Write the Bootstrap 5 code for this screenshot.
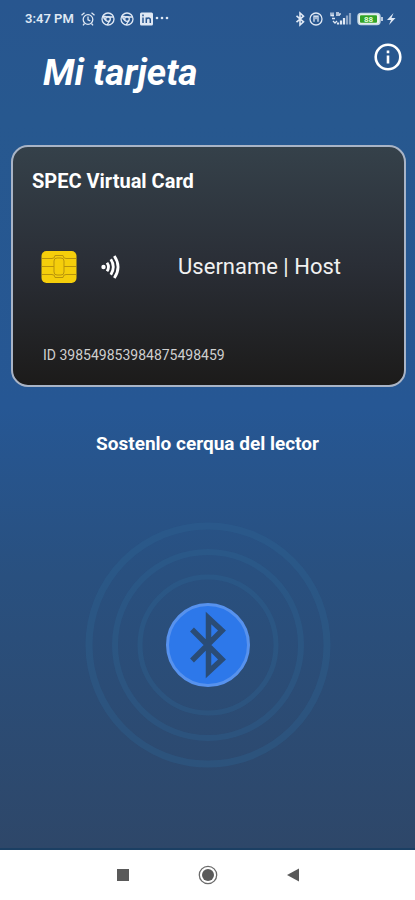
<!DOCTYPE html>
<html lang="es">
<head>
<meta charset="utf-8">
<meta name="viewport" content="width=device-width, initial-scale=1">
<title>Mi tarjeta</title>
<link href="https://cdn.jsdelivr.net/npm/bootstrap@5.3.0/dist/css/bootstrap.min.css" rel="stylesheet">
<style>
body { font-family: Roboto, "Liberation Sans", sans-serif; background: #fff; }
.screen { background: linear-gradient(#28568f 0%, #27588f 14%, #265794 48%, #29507f 68%, #2e4769 100%); border-bottom: 2px solid #1b3f63; }
.status { height: 38px; padding-left: 25px; padding-right: 18px; color: #dfe8f4; }
.clock { font-size: 13px; line-height: 16px; font-weight: 600; }
.top-row { padding-left: 43px; padding-right: 11px; }
.page-title { font-size: 37px; line-height: 44px; padding-top: 13px; }
.info-btn { width: 32px; height: 32px; margin-top: 3px; }
.pass { margin: 50px 9px 0 11px; height: 242px; padding: 19px 19px 20px; border: 2px solid #a9b4c6; border-radius: 17px; background: linear-gradient(#35414a, #2a2e36 50%, #1c1b1a); }
.pass-name { font-size: 20px; line-height: 30px; }
.pass-row { padding-left: 9px; padding-bottom: 8px; }
.contactless { margin-left: 24px; }
.pass-user { font-size: 22px; line-height: 32px; color: #f1f1f1; margin-right: 44px; }
.pass-id { font-size: 14px; line-height: 20px; color: #cfcfcf; padding-left: 11px; }
.hint { font-size: 19px; line-height: 28px; margin-top: 43px; }
.radar { margin-top: 62px; }
.nav-keys { height: 50px; gap: 55px; }
.nav-keys .btn { width: 30px; height: 30px; }
</style>
<script src="https://cdn.jsdelivr.net/npm/bootstrap@5.3.0/dist/js/bootstrap.bundle.min.js"></script>
</head>
<body class="d-flex flex-column min-vh-100">
<main class="screen flex-grow-1 d-flex flex-column text-white">
  <div class="status d-flex align-items-center justify-content-between">
    <div class="d-flex align-items-center">
      <span class="clock">3:47 PM</span>
      <svg class="ms-1" width="92" height="16" viewBox="0 0 92 16" fill="none" stroke="currentColor" aria-hidden="true">
        <g stroke-width="1.300">
          <circle cx="10" cy="8.500" r="4.800"/><path d="M10 5.500v3.300l2.300 1M3.500 4.200l3-2.400M16.500 4.200l-3-2.400M6.500 12.500L5 14.300M13.500 12.500l1.500 1.800"/>
          <circle cx="30" cy="8" r="6"/><circle cx="30" cy="8" r="2.300"/><path d="M25 5l4 1h6M28 9.500L25.500 7M32 9.300L29 14M24.800 5l2.800 4.500"/>
          <circle cx="49" cy="8" r="6"/><circle cx="49" cy="8" r="2.300"/><path d="M44 5l4 1h6M47 9.500L44.500 7M51 9.300L48 14M43.800 5l2.800 4.500"/>
        </g>
        <rect x="62" y="1.500" width="13" height="13" rx="1.500" fill="currentColor" stroke="none"/>
        <path d="M65 6.500v5.500M65 3.600v1.700M68.300 12V6.500M68.300 9q0-2 2-2t2 2v3" stroke="#28568f" stroke-width="1.500"/>
        <g fill="currentColor" stroke="none"><circle cx="79" cy="7" r="1.300"/><circle cx="84" cy="7" r="1.300"/><circle cx="89" cy="7" r="1.300"/></g>
      </svg>
    </div>
    <svg width="102" height="16" viewBox="0 0 102 16" fill="none" stroke="currentColor" aria-hidden="true">
      <path d="M1.500 4.800l7 6L5 14V2L8.500 5.200l-7 6" stroke-width="1.600"/>
      <circle cx="21" cy="8" r="6" stroke-width="1.300"/><path d="M19 10.800V5.200h4v5.600M21 5.200v3" stroke-width="1.300"/>
      <path d="M36 1.500v3h3M38 1.500v4M41 2h3M41 4h4M45 2v2M37 7.500h3M38 10l2 2 2-2" stroke-width="1.300"/>
      <path d="M43 13.500v-2M46 13.500V9.500M49 13.500V7" stroke-width="2.200"/><path d="M52 13.500V4.500M55 13.500V2" stroke-width="2.200" opacity=".55"/>
      <rect x="63" y="2.500" width="22" height="11" rx="3" fill="#ecf5ed" stroke="#c5d8e5" stroke-width="1.400"/>
      <rect x="65" y="4.300" width="17" height="7.400" rx="1" fill="#32a427" stroke="none"/>
      <path d="M87 6v4" stroke-width="1.600"/>
      <text x="73.500" y="11" text-anchor="middle" font-size="8" font-weight="700" fill="#e4ffd9" stroke="none">88</text>
      <path d="M98.500 2l-6.500 7h4l-2 5 6.500-7h-4z" fill="currentColor" stroke="none"/>
    </svg>
  </div>
  <header class="top-row d-flex justify-content-between align-items-start">
    <h1 class="page-title fw-bold fst-italic mb-0">Mi tarjeta</h1>
    <button type="button" class="info-btn btn p-0 border-0 text-white d-flex align-items-center justify-content-center" aria-label="Información">
      <svg width="28" height="28" viewBox="0 0 28 28" fill="none" stroke="currentColor" stroke-width="2.600"><circle cx="14" cy="14" r="12.300"/><path d="M14 12.500v8M14 7.500v2.700"/></svg>
    </button>
  </header>
  <section class="pass d-flex flex-column justify-content-between">
    <h2 class="pass-name fw-bold mb-0">SPEC Virtual Card</h2>
    <div class="pass-row d-flex align-items-center">
      <svg width="36" height="34" viewBox="0 0 36 34" aria-hidden="true">
        <rect x=".5" y="1" width="35" height="32" rx="5" fill="#f5ce0b"/>
        <g fill="none" stroke="#b8930c" stroke-width="1"><path d="M1 8.500h10q3 0 3-3M35 8.500H25q-3 0-3-3M1 16.500h12M23 16.500h12M1 24.500h10q3 0 3 3M35 24.500H25q-3 0-3 3M14 5.500h8M14 27.500h8"/><rect x="13" y="8" width="10" height="17" rx="3"/></g>
      </svg>
      <svg class="contactless" width="20" height="26" viewBox="0 0 20 26" fill="none" stroke="#fff" stroke-width="2.800" aria-hidden="true">
        <circle cx="2.500" cy="13" r="2.200" fill="#fff" stroke="none"/><path d="M6 8.800q3 4.200 0 8.400M9.800 5.300q5 7.700 0 15.400M13.300 2q7.500 11 0 22"/>
      </svg>
      <div class="pass-user ms-auto">Username | Host</div>
    </div>
    <div class="pass-id">ID 398549853984875498459</div>
  </section>
  <p class="hint fw-bold text-center mb-0">Sostenlo cerqua del lector</p>
  <div class="radar d-flex justify-content-center">
    <svg width="250" height="250" viewBox="0 0 250 250" fill="none" role="img" aria-label="Bluetooth">
      <g stroke="#2e6896" stroke-opacity=".32"><circle cx="125" cy="125" r="119" stroke-width="7"/><circle cx="125" cy="125" r="93" stroke-width="6"/><circle cx="125" cy="125" r="68" stroke-width="5"/></g>
      <circle cx="125" cy="125" r="40.500" fill="#2d78ea" stroke="#5792ee" stroke-width="3"/>
      <path d="M109 109.500L139 139.500L125.500 152V98L139 110.500L109 140.500" stroke="#2a4c76" stroke-width="5.500" stroke-miterlimit="3"/>
    </svg>
  </div>
</main>
<nav class="nav-keys d-flex align-items-center justify-content-center" aria-label="Sistema">
  <button type="button" class="btn p-0 border-0 d-flex align-items-center justify-content-center" aria-label="Recientes"><svg width="14" height="14"><rect x="1" y="1" width="12" height="12" fill="#5a5a5a"/></svg></button>
  <button type="button" class="btn p-0 border-0 d-flex align-items-center justify-content-center" aria-label="Inicio"><svg width="20" height="20"><circle cx="10" cy="10" r="8.700" fill="none" stroke="#6b6b6b" stroke-width="1.300"/><circle cx="10" cy="10" r="6" fill="#5a5a5a"/></svg></button>
  <button type="button" class="btn p-0 border-0 d-flex align-items-center justify-content-center" aria-label="Atrás"><svg width="14" height="14"><path d="M13 .5v13L1 7z" fill="#5a5a5a"/></svg></button>
</nav>
</body>
</html>
